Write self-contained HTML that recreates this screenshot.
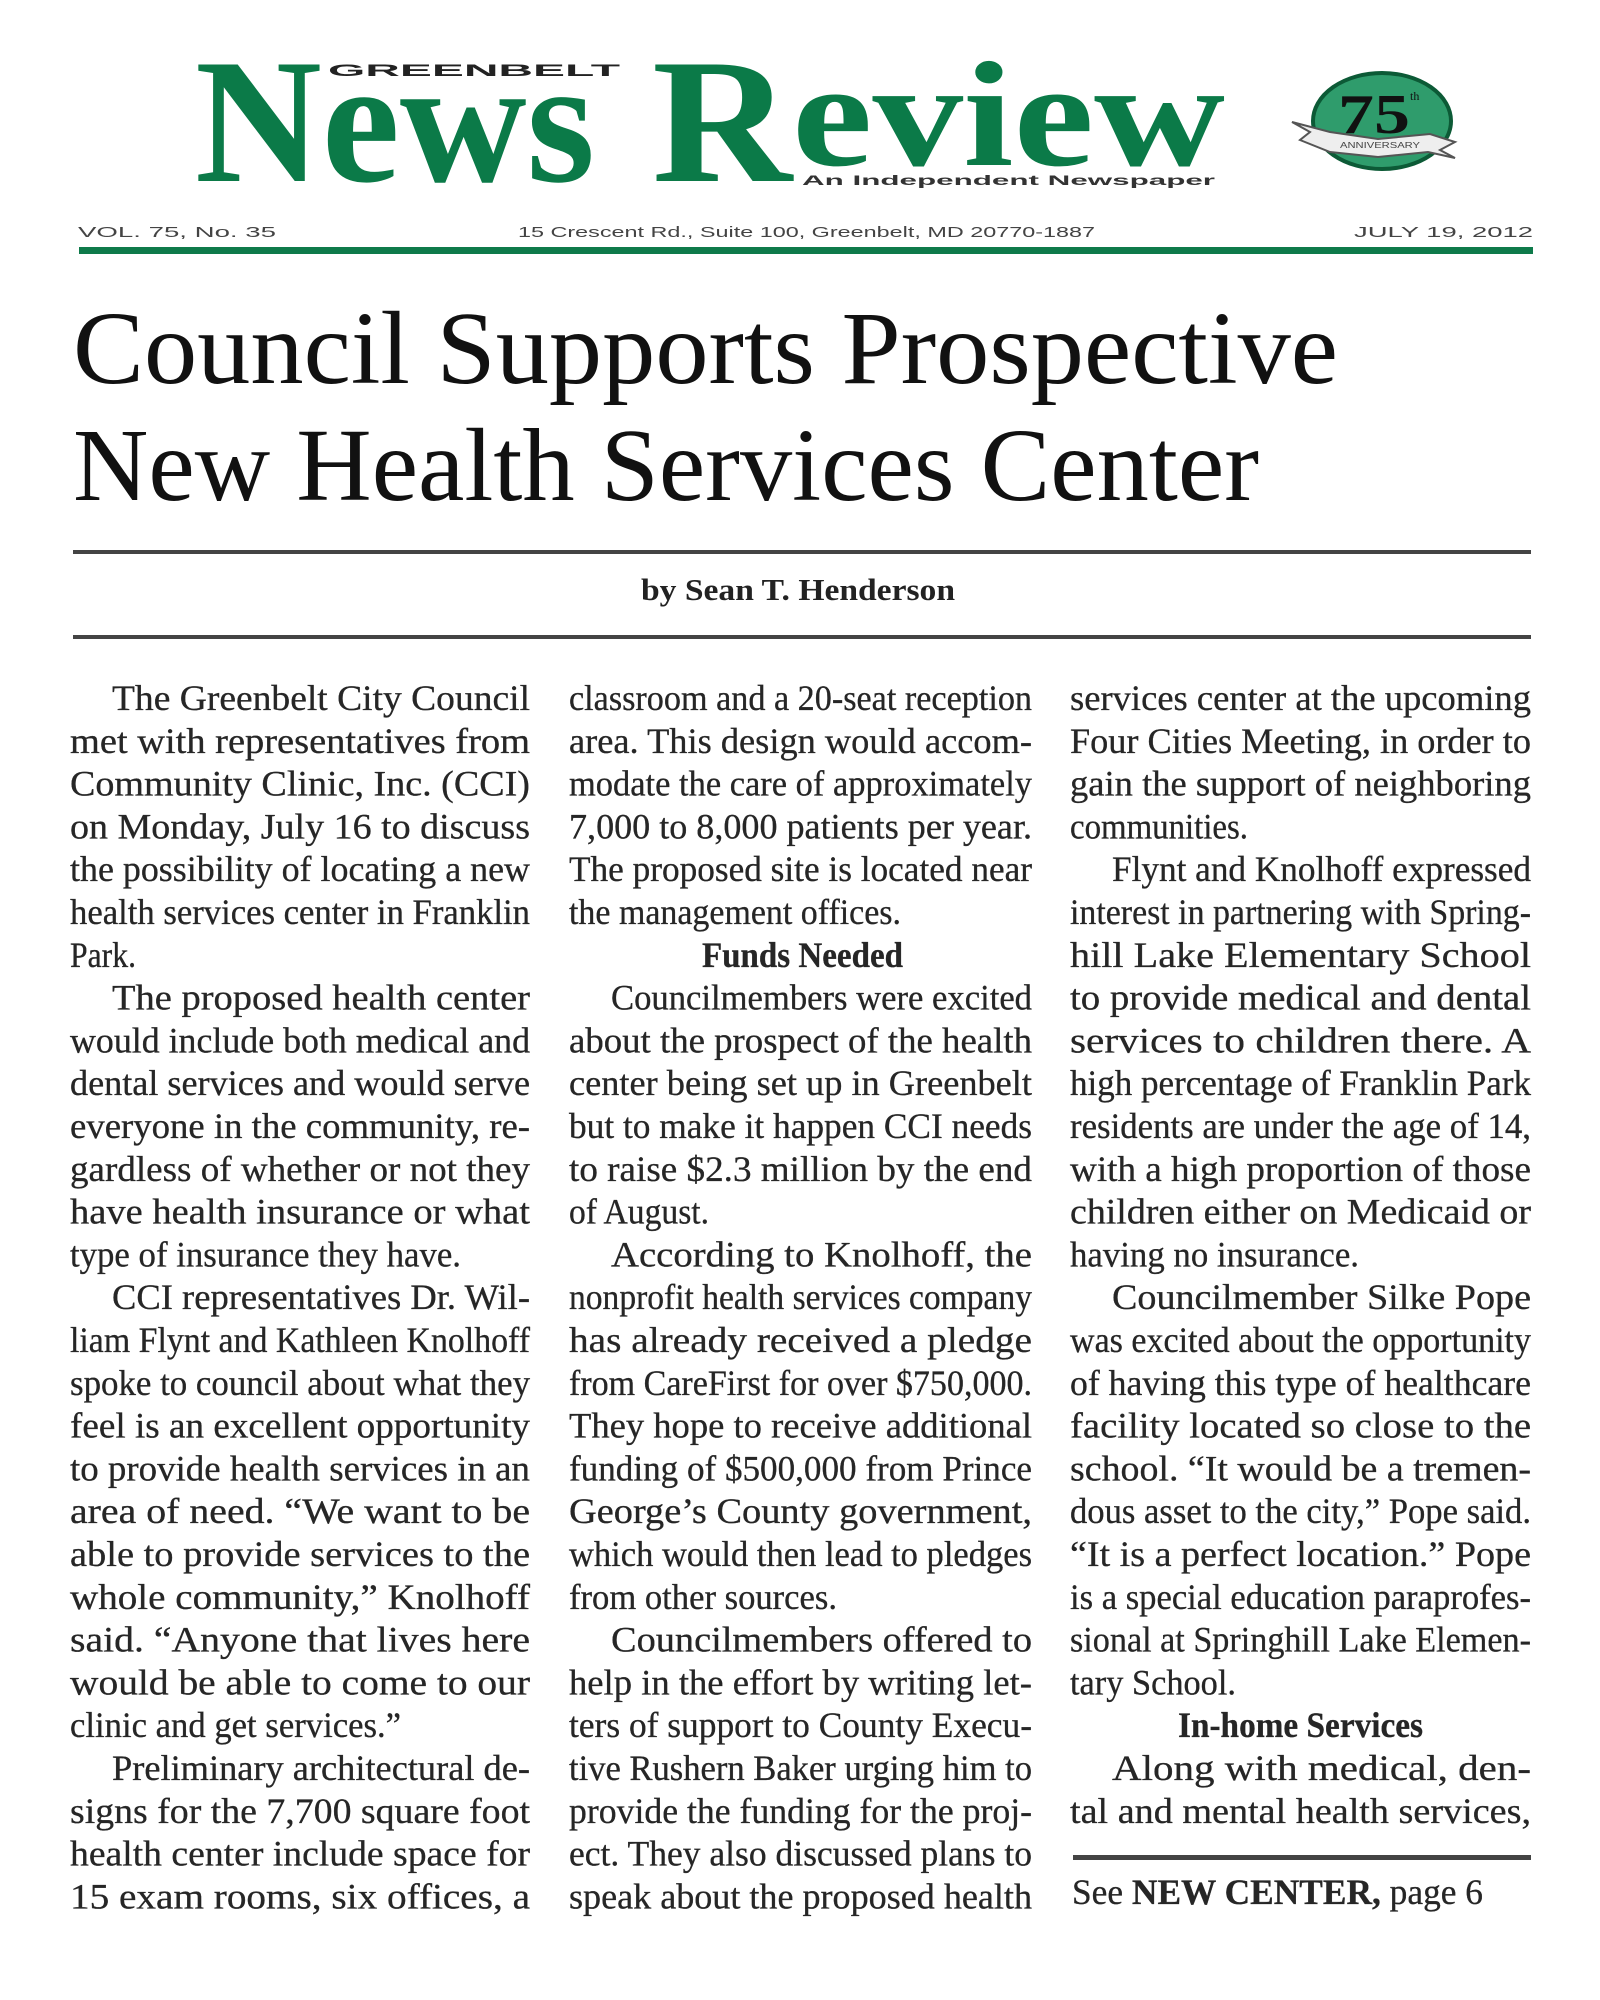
<!DOCTYPE html>
<html><head><meta charset="utf-8"><style>
html,body{margin:0;padding:0;background:#fff;}
svg{display:block;}
.b{font-family:"Liberation Serif",serif;font-size:36px;fill:#262626;stroke:#262626;stroke-width:0.3;}
</style></head><body>
<svg width="1600" height="2000" viewBox="0 0 1600 2000" xmlns="http://www.w3.org/2000/svg">
<rect width="1600" height="2000" fill="#fff"/>
<!-- Masthead -->
<text x="328" y="76" font-family="Liberation Sans,sans-serif" font-weight="bold" font-size="17" fill="#222" textLength="292" lengthAdjust="spacingAndGlyphs">GREENBELT</text>
<text x="195" y="181" font-family="Liberation Serif,serif" font-weight="bold" font-size="178" fill="#0b7a48" textLength="400" lengthAdjust="spacingAndGlyphs">News</text>
<text x="652" y="181" font-family="Liberation Serif,serif" font-weight="bold" font-size="178" fill="#0b7a48" textLength="140" lengthAdjust="spacingAndGlyphs">R</text>
<text x="792" y="165" font-family="Liberation Serif,serif" font-weight="bold" font-size="150" fill="#0b7a48" textLength="433" lengthAdjust="spacingAndGlyphs">eview</text>
<text x="802" y="185" font-family="Liberation Sans,sans-serif" font-weight="bold" font-size="14" fill="#333" textLength="413" lengthAdjust="spacingAndGlyphs">An Independent Newspaper</text>
<!-- 75th logo -->
<ellipse cx="1382" cy="121" rx="69" ry="48" fill="#2f9c6c" stroke="#0c5a36" stroke-width="4"/>
<text x="1338" y="133" font-family="Liberation Serif,serif" font-weight="bold" font-size="56" fill="#111" textLength="72" lengthAdjust="spacingAndGlyphs">75</text>
<text x="1410" y="100" font-family="Liberation Serif,serif" font-size="12" fill="#111">th</text>
<path d="M1292 122 L1330 132 L1378 139 L1430 134 L1455 142 L1440 150 L1455 158 L1428 152 L1378 157 L1330 152 L1300 140 L1310 132 Z" fill="#eee" stroke="#555" stroke-width="2"/>
<text x="1340" y="148" font-family="Liberation Sans,sans-serif" font-size="8" fill="#444" textLength="80" lengthAdjust="spacingAndGlyphs">ANNIVERSARY</text>
<!-- info row -->
<g font-family="Liberation Sans,sans-serif" font-size="15" fill="#444">
<text x="78" y="237" textLength="198" lengthAdjust="spacingAndGlyphs">VOL. 75, No. 35</text>
<text x="518" y="237" textLength="577" lengthAdjust="spacingAndGlyphs">15 Crescent Rd., Suite 100, Greenbelt, MD 20770-1887</text>
<text x="1354" y="237" textLength="179" lengthAdjust="spacingAndGlyphs">JULY 19, 2012</text>
</g>
<rect x="79" y="247" width="1454" height="7" fill="#0e7a4a"/>
<!-- headline -->
<g font-family="Liberation Serif,serif" font-size="104" fill="#111">
<text x="73" y="383" textLength="1265" lengthAdjust="spacingAndGlyphs">Council Supports Prospective</text>
<text x="73" y="500" textLength="1186" lengthAdjust="spacingAndGlyphs">New Health Services Center</text>
</g>
<rect x="73" y="550" width="1458" height="4" fill="#444"/>
<text x="641" y="600" font-family="Liberation Serif,serif" font-weight="bold" font-size="31" fill="#222" textLength="314" lengthAdjust="spacingAndGlyphs">by Sean T. Henderson</text>
<rect x="73" y="635" width="1458" height="4" fill="#444"/>

<g class="b">
<!-- Column 1 -->
<text x="112" y="710" textLength="418" lengthAdjust="spacingAndGlyphs">The Greenbelt City Council</text>
<text x="70" y="752.8" textLength="460" lengthAdjust="spacingAndGlyphs">met with representatives from</text>
<text x="70" y="795.6" textLength="460" lengthAdjust="spacingAndGlyphs">Community Clinic, Inc. (CCI)</text>
<text x="70" y="838.4" textLength="460" lengthAdjust="spacingAndGlyphs">on Monday, July 16 to discuss</text>
<text x="70" y="881.2" textLength="460" lengthAdjust="spacingAndGlyphs">the possibility of locating a new</text>
<text x="70" y="924" textLength="460" lengthAdjust="spacingAndGlyphs">health services center in Franklin</text>
<text x="70" y="966.8" textLength="66" lengthAdjust="spacingAndGlyphs">Park.</text>
<text x="112" y="1009.6" textLength="418" lengthAdjust="spacingAndGlyphs">The proposed health center</text>
<text x="70" y="1052.4" textLength="460" lengthAdjust="spacingAndGlyphs">would include both medical and</text>
<text x="70" y="1095.2" textLength="460" lengthAdjust="spacingAndGlyphs">dental services and would serve</text>
<text x="70" y="1138" textLength="460" lengthAdjust="spacingAndGlyphs">everyone in the community, re-</text>
<text x="70" y="1180.8" textLength="460" lengthAdjust="spacingAndGlyphs">gardless of whether or not they</text>
<text x="70" y="1223.6" textLength="460" lengthAdjust="spacingAndGlyphs">have health insurance or what</text>
<text x="70" y="1266.4" textLength="391" lengthAdjust="spacingAndGlyphs">type of insurance they have.</text>
<text x="112" y="1309.2" textLength="418" lengthAdjust="spacingAndGlyphs">CCI representatives Dr. Wil-</text>
<text x="70" y="1352" textLength="460" lengthAdjust="spacingAndGlyphs">liam Flynt and Kathleen Knolhoff</text>
<text x="70" y="1394.8" textLength="460" lengthAdjust="spacingAndGlyphs">spoke to council about what they</text>
<text x="70" y="1437.6" textLength="460" lengthAdjust="spacingAndGlyphs">feel is an excellent opportunity</text>
<text x="70" y="1480.4" textLength="460" lengthAdjust="spacingAndGlyphs">to provide health services in an</text>
<text x="70" y="1523.2" textLength="460" lengthAdjust="spacingAndGlyphs">area of need.  “We want to be</text>
<text x="70" y="1566" textLength="460" lengthAdjust="spacingAndGlyphs">able to provide services to the</text>
<text x="70" y="1608.8" textLength="460" lengthAdjust="spacingAndGlyphs">whole community,” Knolhoff</text>
<text x="70" y="1651.6" textLength="460" lengthAdjust="spacingAndGlyphs">said.  “Anyone that lives here</text>
<text x="70" y="1694.4" textLength="460" lengthAdjust="spacingAndGlyphs">would be able to come to our</text>
<text x="70" y="1737.2" textLength="331" lengthAdjust="spacingAndGlyphs">clinic and get services.”</text>
<text x="112" y="1780" textLength="418" lengthAdjust="spacingAndGlyphs">Preliminary architectural de-</text>
<text x="70" y="1822.8" textLength="460" lengthAdjust="spacingAndGlyphs">signs for the 7,700 square foot</text>
<text x="70" y="1865.6" textLength="460" lengthAdjust="spacingAndGlyphs">health center include space for</text>
<text x="70" y="1908.4" textLength="460" lengthAdjust="spacingAndGlyphs">15 exam rooms, six offices, a</text>

<!-- Column 2 -->
<text x="569" y="710" textLength="463" lengthAdjust="spacingAndGlyphs">classroom and a 20-seat reception</text>
<text x="569" y="752.8" textLength="463" lengthAdjust="spacingAndGlyphs">area.  This design would accom-</text>
<text x="569" y="795.6" textLength="463" lengthAdjust="spacingAndGlyphs">modate the care of approximately</text>
<text x="569" y="838.4" textLength="463" lengthAdjust="spacingAndGlyphs">7,000 to 8,000 patients per year.</text>
<text x="569" y="881.2" textLength="463" lengthAdjust="spacingAndGlyphs">The proposed site is located near</text>
<text x="569" y="924" textLength="332" lengthAdjust="spacingAndGlyphs">the management offices.</text>
<text x="702" y="966.8" font-weight="bold" textLength="201" lengthAdjust="spacingAndGlyphs">Funds Needed</text>
<text x="611" y="1009.6" textLength="421" lengthAdjust="spacingAndGlyphs">Councilmembers were excited</text>
<text x="569" y="1052.4" textLength="463" lengthAdjust="spacingAndGlyphs">about the prospect of the health</text>
<text x="569" y="1095.2" textLength="463" lengthAdjust="spacingAndGlyphs">center being set up in Greenbelt</text>
<text x="569" y="1138" textLength="463" lengthAdjust="spacingAndGlyphs">but to make it happen CCI needs</text>
<text x="569" y="1180.8" textLength="463" lengthAdjust="spacingAndGlyphs">to raise $2.3 million by the end</text>
<text x="569" y="1223.6" textLength="140" lengthAdjust="spacingAndGlyphs">of August.</text>
<text x="611" y="1266.4" textLength="421" lengthAdjust="spacingAndGlyphs">According to Knolhoff, the</text>
<text x="569" y="1309.2" textLength="463" lengthAdjust="spacingAndGlyphs">nonprofit health services company</text>
<text x="569" y="1352" textLength="463" lengthAdjust="spacingAndGlyphs">has already received a pledge</text>
<text x="569" y="1394.8" textLength="463" lengthAdjust="spacingAndGlyphs">from CareFirst for over $750,000.</text>
<text x="569" y="1437.6" textLength="463" lengthAdjust="spacingAndGlyphs">They hope to receive additional</text>
<text x="569" y="1480.4" textLength="463" lengthAdjust="spacingAndGlyphs">funding of $500,000 from Prince</text>
<text x="569" y="1523.2" textLength="463" lengthAdjust="spacingAndGlyphs">George’s County government,</text>
<text x="569" y="1566" textLength="463" lengthAdjust="spacingAndGlyphs">which would then lead to pledges</text>
<text x="569" y="1608.8" textLength="268" lengthAdjust="spacingAndGlyphs">from other sources.</text>
<text x="611" y="1651.6" textLength="421" lengthAdjust="spacingAndGlyphs">Councilmembers offered to</text>
<text x="569" y="1694.4" textLength="463" lengthAdjust="spacingAndGlyphs">help in the effort by writing let-</text>
<text x="569" y="1737.2" textLength="463" lengthAdjust="spacingAndGlyphs">ters of support to County Execu-</text>
<text x="569" y="1780" textLength="463" lengthAdjust="spacingAndGlyphs">tive Rushern Baker urging him to</text>
<text x="569" y="1822.8" textLength="463" lengthAdjust="spacingAndGlyphs">provide the funding for the proj-</text>
<text x="569" y="1865.6" textLength="463" lengthAdjust="spacingAndGlyphs">ect.  They also discussed plans to</text>
<text x="569" y="1908.4" textLength="463" lengthAdjust="spacingAndGlyphs">speak about the proposed health</text>

<!-- Column 3 -->
<text x="1070" y="710" textLength="461" lengthAdjust="spacingAndGlyphs">services center at the upcoming</text>
<text x="1070" y="752.8" textLength="461" lengthAdjust="spacingAndGlyphs">Four Cities Meeting, in order to</text>
<text x="1070" y="795.6" textLength="461" lengthAdjust="spacingAndGlyphs">gain the support of neighboring</text>
<text x="1070" y="838.4" textLength="178" lengthAdjust="spacingAndGlyphs">communities.</text>
<text x="1112" y="881.2" textLength="419" lengthAdjust="spacingAndGlyphs">Flynt and Knolhoff expressed</text>
<text x="1070" y="924" textLength="461" lengthAdjust="spacingAndGlyphs">interest in partnering with Spring-</text>
<text x="1070" y="966.8" textLength="461" lengthAdjust="spacingAndGlyphs">hill Lake Elementary School</text>
<text x="1070" y="1009.6" textLength="461" lengthAdjust="spacingAndGlyphs">to provide medical and dental</text>
<text x="1070" y="1052.4" textLength="461" lengthAdjust="spacingAndGlyphs">services to children there.  A</text>
<text x="1070" y="1095.2" textLength="461" lengthAdjust="spacingAndGlyphs">high percentage of Franklin Park</text>
<text x="1070" y="1138" textLength="461" lengthAdjust="spacingAndGlyphs">residents are under the age of 14,</text>
<text x="1070" y="1180.8" textLength="461" lengthAdjust="spacingAndGlyphs">with a high proportion of those</text>
<text x="1070" y="1223.6" textLength="461" lengthAdjust="spacingAndGlyphs">children either on Medicaid or</text>
<text x="1070" y="1266.4" textLength="289" lengthAdjust="spacingAndGlyphs">having no insurance.</text>
<text x="1112" y="1309.2" textLength="419" lengthAdjust="spacingAndGlyphs">Councilmember Silke Pope</text>
<text x="1070" y="1352" textLength="461" lengthAdjust="spacingAndGlyphs">was excited about the opportunity</text>
<text x="1070" y="1394.8" textLength="461" lengthAdjust="spacingAndGlyphs">of having this type of healthcare</text>
<text x="1070" y="1437.6" textLength="461" lengthAdjust="spacingAndGlyphs">facility located so close to the</text>
<text x="1070" y="1480.4" textLength="461" lengthAdjust="spacingAndGlyphs">school.  “It would be a tremen-</text>
<text x="1070" y="1523.2" textLength="461" lengthAdjust="spacingAndGlyphs">dous asset to the city,” Pope said.</text>
<text x="1070" y="1566" textLength="461" lengthAdjust="spacingAndGlyphs">“It is a perfect location.”  Pope</text>
<text x="1070" y="1608.8" textLength="461" lengthAdjust="spacingAndGlyphs">is a special education paraprofes-</text>
<text x="1070" y="1651.6" textLength="461" lengthAdjust="spacingAndGlyphs">sional at Springhill Lake Elemen-</text>
<text x="1070" y="1694.4" textLength="166" lengthAdjust="spacingAndGlyphs">tary School.</text>
<text x="1178" y="1737.2" font-weight="bold" textLength="245" lengthAdjust="spacingAndGlyphs">In-home Services</text>
<text x="1112" y="1780" textLength="419" lengthAdjust="spacingAndGlyphs">Along with medical, den-</text>
<text x="1070" y="1822.8" textLength="461" lengthAdjust="spacingAndGlyphs">tal and mental health services,</text>
<text x="1072" y="1904" textLength="411" lengthAdjust="spacingAndGlyphs">See <tspan font-weight="bold">NEW CENTER,</tspan> page 6</text>
</g>
<rect x="1073" y="1855" width="458" height="5" fill="#444"/>
</svg>
</body></html>
